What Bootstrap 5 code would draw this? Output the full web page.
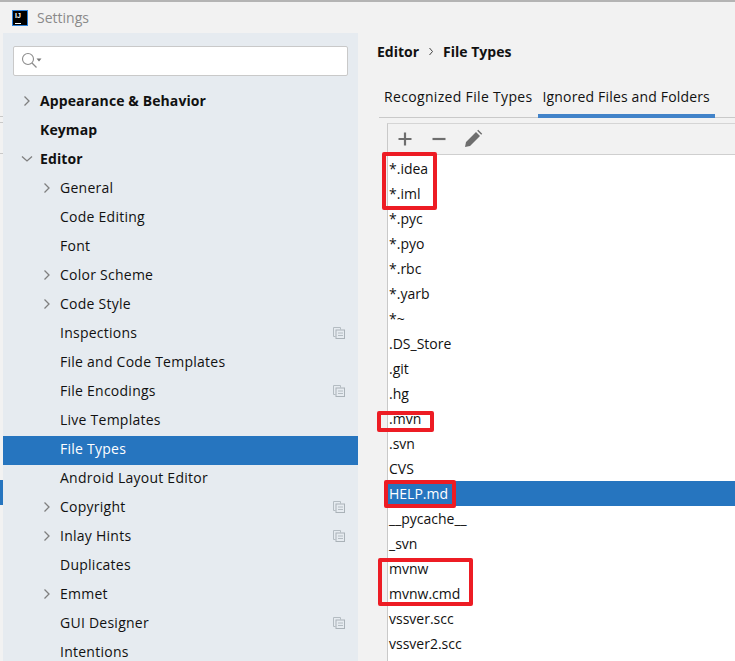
<!DOCTYPE html>
<html lang="en">
<head>
<meta charset="utf-8">
<title>Settings</title>
<link href="https://cdn.jsdelivr.net/npm/bootstrap@5.3.0/dist/css/bootstrap.min.css" rel="stylesheet">
<style>
html,body{height:661px;overflow:hidden}
body{background:#f2f2f2;font-family:"Open Sans","Noto Sans",sans-serif;font-size:14px;color:#111;position:relative;margin:0}
.topline{height:2px;background:#b4b4b4}
.titlebar{height:31px;padding-left:12px;gap:9px}
.ij-logo{width:16px;height:16px;background:#000;border:1px solid #2a7fd8;color:#fff;font:700 7px/8px "Liberation Sans",sans-serif;padding:1px 0 0 2px;position:relative}
.ij-logo i{position:absolute;left:2px;bottom:1px;width:6px;height:1px;background:#fff}
.title-txt{color:#8a8a8a;font-size:14px}
.panes{height:628px}
.sidebar{width:355px;margin-left:3px;background:#e6ebf0;flex:none;overflow:hidden}
.searchbox{height:30px;margin:13px 10px 12px 10px;background:#fff;border:1px solid #c9c9c9;border-radius:2px;padding-left:7px}
.tree-row{height:29px;padding-right:13px;padding-bottom:4px}
.tree-row.lvl0{padding-left:17px;letter-spacing:.1px}
.tree-row.lvl1{padding-left:37px;letter-spacing:.25px}
.tree-row.on{background:#2675bf;color:#fff}
.lvl0 .tree-txt{font-weight:700}
.tree-arrow{width:20px;flex:none;display:flex;padding-left:3px}
.tree-txt{white-space:nowrap}
.content{flex:1;min-width:0;padding-left:19px}
.crumb{height:37px;font-weight:700;gap:9px}
.tabbar{height:48px;margin-left:2px;border-bottom:1px solid #c9c9c9;padding-left:5px;gap:10px;letter-spacing:.33px}
.tab-item{padding-top:16px;white-space:nowrap}
.tab-item.on{border-bottom:4px solid #4283c9;margin-bottom:-1px;padding:16px 5px 0 5px;margin-left:-5px;letter-spacing:.16px}
.listwrap{margin:5px 0 0 10px;border-left:1px solid #c9c9c9;border-top:1px solid #d5d5d5}
.toolbar{height:31px;border-bottom:1px solid #cfcfcf;padding-left:7px;gap:14px}
.file-list{background:#fff;padding-top:1px;min-height:520px}
.file-row{height:25px;padding-left:1px;line-height:25px;white-space:nowrap}
.file-row.on{background:#2675bf;color:#fff}
.redbox{position:absolute;border:4px solid #ed1c24;border-radius:2px}
.edgeblue{position:absolute;left:0;top:480px;width:3px;height:25px;background:#2675bf}
.edgeline{position:absolute;left:0;width:3px;height:1px;background:#c9c9c9}
</style>
</head>
<body>
<div class="topline"></div>
<div class="titlebar d-flex align-items-center">
  <div class="ij-logo">IJ<i></i></div>
  <span class="title-txt">Settings</span>
</div>
<div class="panes d-flex">
  <div class="sidebar">
    <div class="searchbox d-flex align-items-center">
      <svg width="22" height="18" viewBox="0 0 22 18"><circle cx="7" cy="7" r="5.500" fill="none" stroke="#8c8c8c" stroke-width="1.100"/><path d="M11 11l4.500 4.500" stroke="#8c8c8c" stroke-width="1.300"/><path d="M15.500 6.500h5l-2.500 3z" fill="#777"/></svg>
    </div>
    <div id="tree"></div>
  </div>
  <div class="content">
    <div class="crumb d-flex align-items-center">
      <span>Editor</span>
      <svg width="6" height="9" viewBox="0 0 6 9"><path d="M1.500 1l3 3.500-3 3.500" fill="none" stroke="#444" stroke-width="1"/></svg>
      <span>File Types</span>
    </div>
    <div class="tabbar d-flex">
      <div class="tab-item">Recognized File Types</div>
      <div class="tab-item on">Ignored Files and Folders</div>
    </div>
    <div class="listwrap">
      <div class="toolbar d-flex align-items-center">
        <svg width="20" height="20" viewBox="0 0 20 20"><path d="M10 3.500v13M3.500 10h13" stroke="#6e6e6e" stroke-width="2.200"/></svg>
        <svg width="20" height="20" viewBox="0 0 20 20"><path d="M3.500 10h13" stroke="#6e6e6e" stroke-width="2.200"/></svg>
        <svg width="20" height="20" viewBox="0 0 20 20"><path d="M2 18l1-5L13 3l4 4L7 17zM14.200 1.800l1-1 4 4-1 1z" fill="#6e6e6e"/></svg>
      </div>
      <div class="file-list" id="files"></div>
    </div>
  </div>
</div>
<div class="edgeblue"></div>
<div class="edgeline" style="top:116px"></div>
<div class="edgeline" style="top:122px"></div>
<div class="edgeline" style="top:153px"></div>
<div class="redbox" style="left:382px;top:152px;width:55px;height:58px"></div>
<div class="redbox" style="left:377px;top:411px;width:57px;height:21px"></div>
<div class="redbox" style="left:384px;top:480px;width:72px;height:28px"></div>
<div class="redbox" style="left:378px;top:558px;width:95px;height:48px"></div>
<script>
var gt='<svg width="8" height="12" viewBox="0 0 8 12"><path d="M1.500 1.500l4.500 4.500-4.500 4.500" fill="none" stroke="#7f7f7f" stroke-width="1.300"/></svg>';
var dn='<svg width="12" height="8" viewBox="0 0 12 8" style="margin-left:-2px"><path d="M1 1.500l5 4.500 5-4.500" fill="none" stroke="#7f7f7f" stroke-width="1.300"/></svg>';
var copy='<svg class="ms-auto" width="12" height="12" viewBox="0 0 12 12"><path d="M.5.500h7v2M2.500 9.500h-2v-9" fill="none" stroke="#b4bcc2"/><rect x="3" y="3" width="8.500" height="8.500" fill="#e6ebf0" stroke="#aab2b8"/><path d="M5 6h5M5 8.500h5" stroke="#b4bcc2"/></svg>';
var T=[[0,'Appearance &amp; Behavior','g'],[0,'Keymap'],[0,'Editor','d'],[1,'General','g'],[1,'Code Editing'],[1,'Font'],[1,'Color Scheme','g'],[1,'Code Style','g'],[1,'Inspections','',1],[1,'File and Code Templates'],[1,'File Encodings','',1],[1,'Live Templates'],[1,'File Types','s'],[1,'Android Layout Editor'],[1,'Copyright','g',1],[1,'Inlay Hints','g',1],[1,'Duplicates'],[1,'Emmet','g'],[1,'GUI Designer','',1],[1,'Intentions']];
document.getElementById('tree').innerHTML=T.map(function(r){
 return '<div class="tree-row d-flex align-items-center lvl'+r[0]+(r[2]=='s'?' on':'')+'"><span class="tree-arrow">'+(r[2]=='g'?gt:r[2]=='d'?dn:'')+'</span><span class="tree-txt">'+r[1]+'</span>'+(r[3]?copy:'')+'</div>';}).join('');
var F=['*.idea','*.iml','*.pyc','*.pyo','*.rbc','*.yarb','*~','.DS_Store','.git','.hg','.mvn','.svn','CVS','HELP.md','__pycache__','_svn','mvnw','mvnw.cmd','vssver.scc','vssver2.scc'];
document.getElementById('files').innerHTML=F.map(function(f){return '<div class="file-row'+(f=='HELP.md'?' on':'')+'">'+f+'</div>';}).join('');
</script>
<script src="https://cdn.jsdelivr.net/npm/bootstrap@5.3.0/dist/js/bootstrap.bundle.min.js"></script>
</body>
</html>
